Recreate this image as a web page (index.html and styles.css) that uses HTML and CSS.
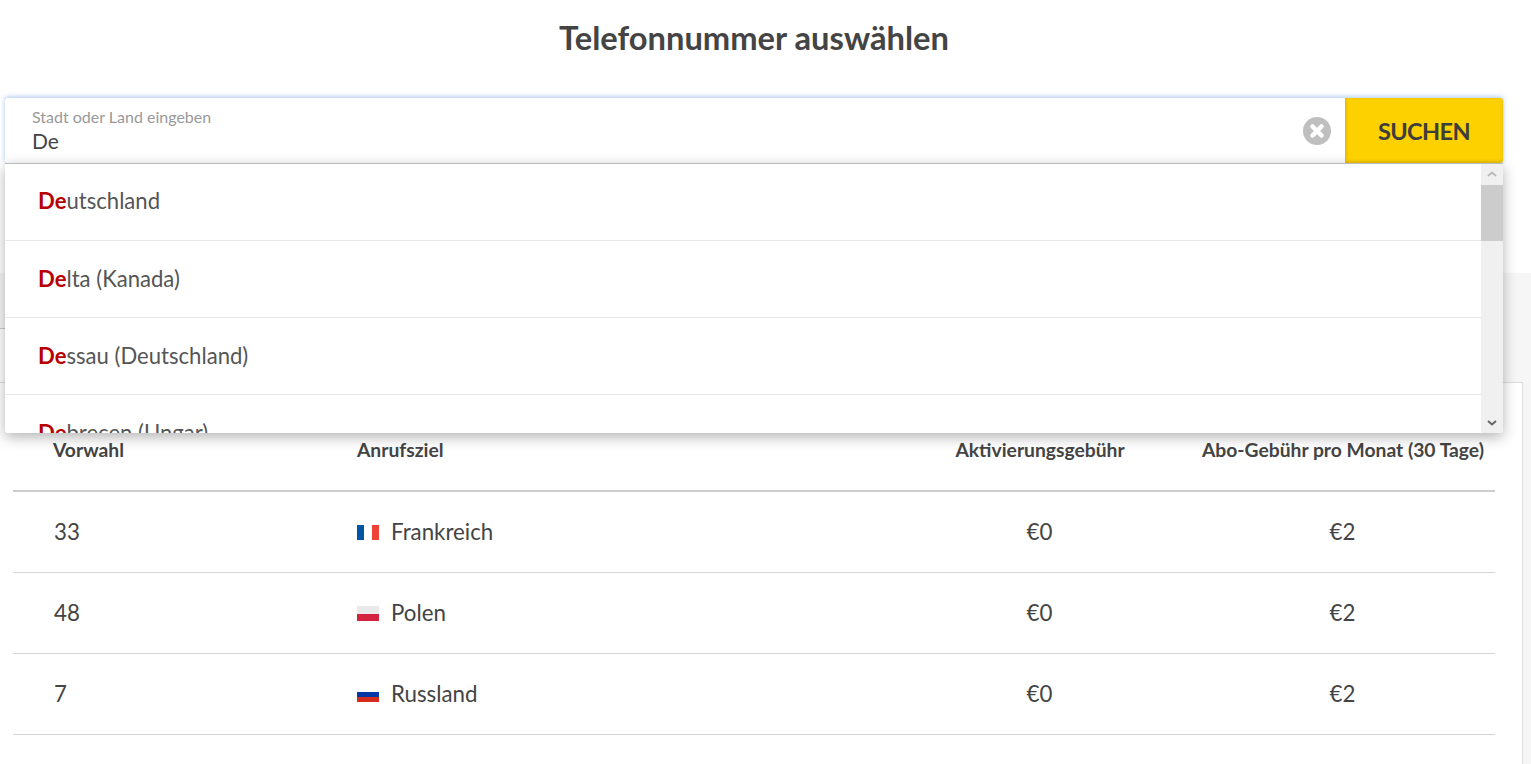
FILE: index.html
```html
<!DOCTYPE html>
<html lang="de">
<head>
    <meta charset="UTF-8">
    <title>Telefonnummer auswählen</title>
    <link rel="stylesheet" href="styles.css">
</head>
<body>
    <header class="top">
        <h1>Telefonnummer auswählen</h1>
    </header>
    <div class="search">
        <div class="search-box">
            <div class="search-field">
                <label>Stadt oder Land eingeben</label>
                <div class="search-value">De</div>
            </div>
            <svg class="clear-icon" width="30" height="30" viewBox="0 0 30 30">
                <circle cx="15" cy="15" r="14" fill="#bfbfbf"/>
                <path d="M10.5 10.5 L19.5 19.5 M19.5 10.5 L10.5 19.5" stroke="#fff" stroke-width="4.5" stroke-linecap="round"/>
            </svg>
            <button class="search-button">SUCHEN</button>
        </div>
        <div class="suggestions">
            <ul class="suggestion-list">
                <li><b>De</b>utschland</li>
                <li><b>De</b>lta (Kanada)</li>
                <li><b>De</b>ssau (Deutschland)</li>
                <li><b>De</b>brecen (Ungar)</li>
            </ul>
            <div class="scrollbar">
                <svg class="arrow" width="10" height="6" viewBox="0 0 10 6"><path d="M1 5 L5 1.5 L9 5" fill="none" stroke="#bbb" stroke-width="2"/></svg>
                <div class="thumb"></div>
                <div class="track"></div>
                <svg class="arrow" width="10" height="6" viewBox="0 0 10 6"><path d="M1 1 L5 4.5 L9 1" fill="none" stroke="#666" stroke-width="2"/></svg>
            </div>
        </div>
    </div>
    <main class="content">
        <div class="lead"></div>
        <div class="card">
            <table class="rates">
                <thead>
                    <tr><th>Vorwahl</th><th>Anrufsziel</th><th class="mid">Aktivierungsgebühr</th><th class="mid">Abo-Gebühr pro Monat (30 Tage)</th></tr>
                </thead>
                <tbody>
                    <tr>
                        <td>33</td>
                        <td><span class="flag flag-fr"></span>Frankreich</td>
                        <td class="mid">€0</td>
                        <td class="mid">€2</td>
                    </tr>
                    <tr>
                        <td>48</td>
                        <td><span class="flag flag-pl"></span>Polen</td>
                        <td class="mid">€0</td>
                        <td class="mid">€2</td>
                    </tr>
                    <tr>
                        <td>7</td>
                        <td><span class="flag flag-ru"></span>Russland</td>
                        <td class="mid">€0</td>
                        <td class="mid">€2</td>
                    </tr>
                </tbody>
            </table>
        </div>
    </main>
</body>
</html>
```
FILE: styles.css
```css
* {
    box-sizing: border-box;
}
html, body {
    height: 100%;
}
body {
    margin: 0;
    background-color: #fff;
    color: #444;
    font-family: "Lato", "Noto Sans", sans-serif;
    overflow: hidden;
    position: relative;
}
.top {
    height: 273px;
    padding: 18px 23px 0 0;
}
h1 {
    margin: 0;
    font-size: 32.7px;
    line-height: 40px;
    font-weight: 700;
    text-align: center;
    color: #444;
}
.search {
    position: absolute;
    top: 98px;
    left: 5px;
    width: 1498px;
    z-index: 10;
}
.search-box {
    display: flex;
    height: 65px;
    align-items: center;
    background-color: #fff;
    border-radius: 3px;
    box-shadow: 0 -1px 5px rgba(80, 140, 230, 0.5);
}
.search-field {
    flex: 1;
    padding: 1px 0 0 27px;
}
.search-field label {
    display: block;
    font-size: 16px;
    line-height: 18px;
    color: #999;
}
.search-value {
    margin-top: 1px;
    font-size: 21px;
    line-height: 28px;
    color: #444;
}
.clear-icon {
    margin-right: 13px;
}
.search-button {
    width: 158px;
    height: 65px;
    border: 0;
    border-radius: 0 3px 3px 0;
    background-color: #fdd000;
    box-shadow: inset 0 -2px 3px rgba(0, 0, 0, 0.12), inset 2px 0 3px rgba(0, 0, 0, 0.06);
    color: #3d3d3d;
    font-family: inherit;
    font-size: 23.5px;
    font-weight: 700;
    letter-spacing: -0.6px;
}
.suggestions {
    display: flex;
    height: 270px;
    background-color: #fff;
    border-top: 1px solid #bbb;
    border-radius: 0 0 3px 3px;
    box-shadow: 0 4px 14px rgba(0, 0, 0, 0.3);
    overflow: hidden;
}
.suggestion-list {
    flex: 1;
    margin: 0;
    padding: 0;
    list-style: none;
}
.suggestion-list li {
    height: 77px;
    padding-left: 33px;
    border-bottom: 1px solid #e8e8e8;
    font-size: 22.1px;
    line-height: 75px;
    color: #555;
}
.suggestion-list li:first-child {
    line-height: 74px;
}
.suggestion-list b {
    color: #b90000;
}
.scrollbar {
    display: flex;
    flex-direction: column;
    align-items: center;
    width: 22px;
    background-color: #f0f0f0;
}
.arrow {
    flex: none;
    margin: 7px 0;
}
.thumb {
    flex: none;
    align-self: stretch;
    height: 56px;
    margin-top: 1px;
    background-color: #ccc;
}
.track {
    flex: 1;
}
.content {
    height: 491px;
    padding: 55px 8px 0 0;
    background-color: #f6f6f6;
}
.lead {
    width: 300px;
    height: 54px;
    background-color: #fff;
    border-top: 1px solid #ccc;
}
.card {
    height: 382px;
    padding: 0 27px 0 13px;
    background-color: #fff;
    border-top: 1px solid #ddd;
    border-right: 1px solid #ddd;
}
.rates {
    width: 100%;
    border-collapse: collapse;
    table-layout: fixed;
}
.rates th {
    height: 108px;
    padding: 26px 0 0 40px;
    font-size: 19.3px;
    font-weight: 700;
    text-align: left;
    border-bottom: 2px solid #ccc;
}
.rates td {
    height: 81px;
    padding-left: 41px;
    font-size: 22.3px;
    border-bottom: 1px solid #d5d5d5;
}
.rates th:nth-child(1) {
    width: 304px;
}
.rates th:nth-child(2) {
    width: 572px;
}
.rates th:nth-child(3) {
    width: 302px;
}
.rates th.mid, .rates td.mid {
    padding-left: 0;
    text-align: center;
}
.rates td:nth-child(2) {
    padding-left: 40px;
}
.flag {
    display: inline-block;
    width: 22px;
    height: 15px;
    margin-right: 12px;
    vertical-align: 0;
}
.flag-fr {
    background: linear-gradient(90deg, #0055a4 0 33%, #fff 33% 66%, #ef4135 66%);
}
.flag-pl {
    background: linear-gradient(180deg, #e9e9e9 0 50%, #d4213d 50%);
}
.flag-ru {
    background: linear-gradient(180deg, #fff 0 33%, #0039a6 33% 66%, #d52b1e 66%);
}
```
